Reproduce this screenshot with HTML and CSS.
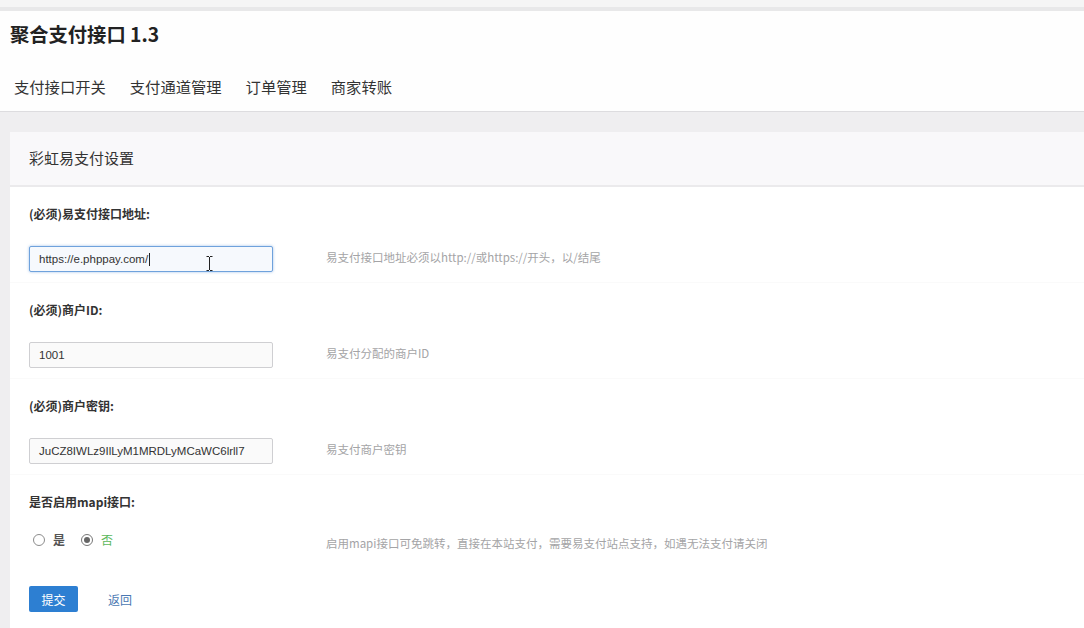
FILE: index.html
```html
<!DOCTYPE html>
<html lang="zh-CN">
<head>
<meta charset="utf-8">
<title>聚合支付接口 1.3</title>
<link rel="stylesheet" href="styles.css">
</head>
<body>
<div class="topstrip"></div>
<header class="header">
  <h1 class="title">聚合支付接口 1.3</h1>
  <nav class="nav">
    <a class="nav-item">支付接口开关</a>
    <a class="nav-item">支付通道管理</a>
    <a class="nav-item">订单管理</a>
    <a class="nav-item">商家转账</a>
  </nav>
</header>
<main class="main">
  <section class="panel">
    <div class="panel-heading">彩虹易支付设置</div>
    <div class="panel-body">
      <div class="group">
        <div class="label">(必须)易支付接口地址:</div>
        <div class="row">
          <div class="field focus">
            <span class="value">https://e.phppay.com/</span><span class="caret"></span>
            <svg class="ibeam" width="7" height="15" viewBox="0 0 7 15"><path d="M0.5 0.5h2.5M4 0.5h2.5M3.5 1v13M0.5 14.5h2.5M4 14.5h2.5" stroke="#222" stroke-width="1" fill="none"/></svg>
          </div>
          <div class="help">易支付接口地址必须以http://或https://开头，以/结尾</div>
        </div>
      </div>
      <div class="group">
        <div class="label">(必须)商户ID:</div>
        <div class="row">
          <div class="field"><span class="value">1001</span></div>
          <div class="help">易支付分配的商户ID</div>
        </div>
      </div>
      <div class="group">
        <div class="label">(必须)商户密钥:</div>
        <div class="row">
          <div class="field"><span class="value">JuCZ8IWLz9IlLyM1MRDLyMCaWC6lrll7</span></div>
          <div class="help">易支付商户密钥</div>
        </div>
      </div>
      <div class="group last">
        <div class="label">是否启用mapi接口:</div>
        <div class="row radio-row">
          <div class="radios">
            <span class="radio"></span><span class="radio-text">是</span>
            <span class="radio checked"></span><span class="radio-text green">否</span>
          </div>
          <div class="help">启用mapi接口可免跳转，直接在本站支付，需要易支付站点支持，如遇无法支付请关闭</div>
        </div>
        <div class="actions">
          <button class="btn">提交</button>
          <a class="back">返回</a>
        </div>
      </div>
    </div>
  </section>
</main>
</body>
</html>
```
FILE: styles.css
```css
* { box-sizing: border-box; }
html, body { margin: 0; padding: 0; }
body {
  background: #efeef0;
  font-family: "Noto Sans CJK SC", "Noto Sans", sans-serif;
  color: #333;
  height: 628px;
  overflow: hidden;
}
.topstrip {
  height: 11px;
  background: #f5f5f5;
  border-bottom: 4px solid #e8e8e9;
}
.header {
  background: #fefefe;
  height: 101px;
  padding: 10px 0 0 10px;
  border-bottom: 1px solid #dddcdf;
}
.title {
  margin: 0;
  font-size: 19.3px;
  line-height: 26px;
  font-weight: 700;
  color: #222;
}
.nav {
  display: flex;
  gap: 24px;
  margin-top: 29px;
  padding-left: 4px;
}
.nav-item {
  font-size: 15.3px;
  line-height: 20px;
  color: #333;
}
.main {
  padding: 20px 0 0 10px;
}
.panel {
  background: #fff;
  height: 500px;
}
.panel-heading {
  height: 55px;
  padding: 0 0 2px 19px;
  display: flex;
  align-items: center;
  font-size: 15px;
  color: #333;
  background: #f9f8fa;
  border-bottom: 2px solid #ebeaec;
}
.panel-body {
  padding-left: 19px;
}
.group {
  padding: 19px 0 10px;
  border-bottom: 1px solid #fafafa;
  margin-left: -19px;
  padding-left: 19px;
}
.group.last { border-bottom: none; }
.label {
  font-size: 12px;
  line-height: 16px;
  font-weight: 700;
  color: #333;
}
.row {
  display: flex;
  align-items: center;
  margin-top: 24px;
  height: 26px;
}
.field {
  position: relative;
  width: 244px;
  height: 26px;
  border: 1px solid #cfcfd2;
  border-radius: 2px;
  background: #fafafa;
  padding-left: 9px;
  display: flex;
  align-items: center;
  font-family: "Liberation Sans", Arial, sans-serif;
  font-size: 11.5px;
  color: #333;
}
.field.focus {
  border-color: #6fa2dc;
  background: #f6f9fd;
  box-shadow: 0 0 3px rgba(80, 140, 215, 0.55);
}
.caret {
  display: inline-block;
  width: 1px;
  height: 13px;
  background: #222;
  margin-left: 1px;
}
.ibeam {
  position: absolute;
  left: 176px;
  top: 9px;
}
.help {
  margin-left: 53px;
  font-size: 11.5px;
  line-height: 16px;
  color: #a4a4a6;
  margin-top: -5px;
}
.radio-row {
  margin-top: 17px;
}
.radios {
  width: 244px;
  display: flex;
  align-items: center;
  font-size: 12px;
  line-height: 16px;
}
.radio {
  width: 12px;
  height: 12px;
  border: 1px solid #8c8c8c;
  border-radius: 50%;
  background: #fff;
  margin-left: 4px;
  position: relative;
}
.radio.checked {
  margin-left: 16px;
  border-color: #777;
}
.radio.checked::after {
  content: "";
  position: absolute;
  left: 2px;
  top: 2px;
  width: 6px;
  height: 6px;
  border-radius: 50%;
  background: #666;
}
.radio-text {
  margin-left: 8px;
  color: #555;
  font-weight: 700;
}
.radio-text.green {
  color: #5cb85c;
  font-weight: 400;
}
.radio-row .help { margin-top: 6px; }
.actions {
  display: flex;
  align-items: center;
  margin-top: 33px;
}
.btn {
  width: 49px;
  height: 26px;
  border: none;
  border-radius: 2px;
  background: #2d7fd2;
  color: #fff;
  font-family: "Noto Sans CJK SC", sans-serif;
  font-size: 12px;
  padding: 0;
}
.back {
  margin-left: 30px;
  font-size: 12px;
  color: #4a78b2;
}
```
